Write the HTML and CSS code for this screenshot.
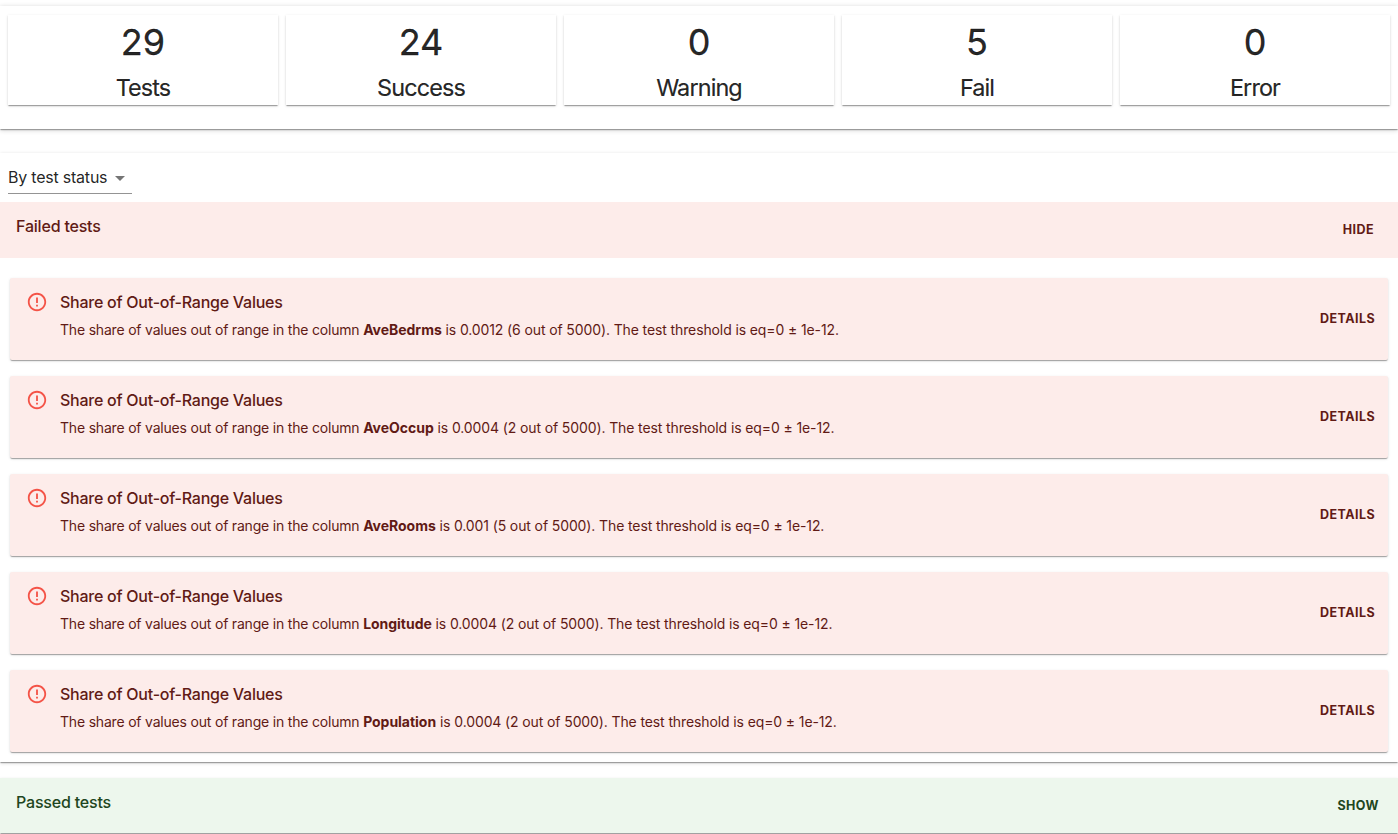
FILE: index.html
```html
<!DOCTYPE html>
<html lang="en">
<head>
<meta charset="utf-8">
<title>Test suite</title>
<link rel="stylesheet" href="styles.css">
</head>
<body>
<section class="paper summary">
  <div class="stat"><div class="num">29</div><div class="label">Tests</div></div>
  <div class="stat"><div class="num">24</div><div class="label">Success</div></div>
  <div class="stat"><div class="num">0</div><div class="label">Warning</div></div>
  <div class="stat"><div class="num">5</div><div class="label">Fail</div></div>
  <div class="stat"><div class="num">0</div><div class="label">Error</div></div>
</section>
<main class="paper group">
  <div class="select"><span class="select-text">By test status</span><svg class="caret" viewBox="0 0 24 24"><path d="M7 10l5 5 5-5z"/></svg></div>
  <div class="banner fail"><span class="title">Failed tests</span><span class="action hide">Hide</span></div>
  <div class="list">
    <article class="test"><svg class="icon" viewBox="0 0 24 24"><path d="M11 15h2v2h-2zm0-8h2v6h-2zm.99-5C6.47 2 2 6.48 2 12s4.47 10 9.99 10C17.52 22 22 17.52 22 12S17.52 2 11.99 2zM12 20c-4.42 0-8-3.58-8-8s3.58-8 8-8 8 3.58 8 8-3.58 8-8 8z"/></svg><div class="body"><h2 class="title">Share of Out-of-Range Values</h2><p class="text"><span class="lead">The share of values out of range in the column </span><b>AveBedrms</b> is 0.0012 (6 out of 5000). The test threshold is eq=0 ± 1e-12.</p></div><span class="action">Details</span></article>
    <article class="test"><svg class="icon" viewBox="0 0 24 24"><path d="M11 15h2v2h-2zm0-8h2v6h-2zm.99-5C6.47 2 2 6.48 2 12s4.47 10 9.99 10C17.52 22 22 17.52 22 12S17.52 2 11.99 2zM12 20c-4.42 0-8-3.58-8-8s3.58-8 8-8 8 3.58 8 8-3.58 8-8 8z"/></svg><div class="body"><h2 class="title">Share of Out-of-Range Values</h2><p class="text"><span class="lead">The share of values out of range in the column </span><b>AveOccup</b> is 0.0004 (2 out of 5000). The test threshold is eq=0 ± 1e-12.</p></div><span class="action">Details</span></article>
    <article class="test"><svg class="icon" viewBox="0 0 24 24"><path d="M11 15h2v2h-2zm0-8h2v6h-2zm.99-5C6.47 2 2 6.48 2 12s4.47 10 9.99 10C17.52 22 22 17.52 22 12S17.52 2 11.99 2zM12 20c-4.42 0-8-3.58-8-8s3.58-8 8-8 8 3.58 8 8-3.58 8-8 8z"/></svg><div class="body"><h2 class="title">Share of Out-of-Range Values</h2><p class="text"><span class="lead">The share of values out of range in the column </span><b>AveRooms</b> is 0.001 (5 out of 5000). The test threshold is eq=0 ± 1e-12.</p></div><span class="action">Details</span></article>
    <article class="test"><svg class="icon" viewBox="0 0 24 24"><path d="M11 15h2v2h-2zm0-8h2v6h-2zm.99-5C6.47 2 2 6.48 2 12s4.47 10 9.99 10C17.52 22 22 17.52 22 12S17.52 2 11.99 2zM12 20c-4.42 0-8-3.58-8-8s3.58-8 8-8 8 3.58 8 8-3.58 8-8 8z"/></svg><div class="body"><h2 class="title">Share of Out-of-Range Values</h2><p class="text"><span class="lead">The share of values out of range in the column </span><b>Longitude</b> is 0.0004 (2 out of 5000). The test threshold is eq=0 ± 1e-12.</p></div><span class="action">Details</span></article>
    <article class="test"><svg class="icon" viewBox="0 0 24 24"><path d="M11 15h2v2h-2zm0-8h2v6h-2zm.99-5C6.47 2 2 6.48 2 12s4.47 10 9.99 10C17.52 22 22 17.52 22 12S17.52 2 11.99 2zM12 20c-4.42 0-8-3.58-8-8s3.58-8 8-8 8 3.58 8 8-3.58 8-8 8z"/></svg><div class="body"><h2 class="title">Share of Out-of-Range Values</h2><p class="text"><span class="lead">The share of values out of range in the column </span><b>Population</b> is 0.0004 (2 out of 5000). The test threshold is eq=0 ± 1e-12.</p></div><span class="action">Details</span></article>
  </div>
</main>
<section class="paper passed">
  <div class="banner success"><span class="title">Passed tests</span><span class="action show">Show</span></div>
</section>
</body>
</html>
```

FILE: styles.css
```css
* { box-sizing: border-box; }
body { margin: 0; height: 834px; overflow: hidden; background: #fff; color: rgba(0,0,0,.87); font-family: Inter, "Liberation Sans", sans-serif; }
.paper { box-shadow: 0 2px 1px -1px rgba(0,0,0,.2), 0 1px 1px rgba(0,0,0,.14), 0 1px 3px rgba(0,0,0,.12); }
.summary { display: grid; grid-template-columns: repeat(5, 270px); gap: 8px; margin-top: 6px; height: 123px; padding: 9px 8px 24px; box-shadow: 0 2px 1px -1px rgba(0,0,0,.2), 0 1px 1px rgba(0,0,0,.14), 0 1px 5px rgba(0,0,0,.2); }
.stat { height: 90px; text-align: center; box-shadow: 0 2px 1px -1px rgba(0,0,0,.2), 0 1px 1px rgba(0,0,0,.14), 0 1px 3px rgba(0,0,0,.12); }
.num { font-size: 36px; line-height: 54px; -webkit-text-stroke: .3px; }
.label { font-size: 23.4px; line-height: 38px; letter-spacing: -.87px; -webkit-text-stroke: .2px; }
.group { margin-top: 24px; height: 609px; padding-top: 9px; box-shadow: 0 2px 1px -1px rgba(0,0,0,.2), 0 1px 1px rgba(0,0,0,.14), 0 1px 4px rgba(0,0,0,.16); }
.select { display: flex; align-items: center; width: 124px; height: 32px; margin-left: 8px; border-bottom: 1px solid rgba(0,0,0,.42); }
.select-text { width: 100px; flex: none; font-size: 16px; letter-spacing: -.22px; white-space: nowrap; padding-bottom: 2px; }
.caret { width: 24px; height: 24px; flex: none; fill: rgba(0,0,0,.54); }
.banner { display: flex; justify-content: space-between; height: 56px; padding: 13px 24px 0 16px; margin-top: 8px; }
.title { margin: 0; font-size: 16px; line-height: 22px; font-weight: 500; letter-spacing: -.25px; }
.banner .title { letter-spacing: -.2px; }
.action { font-size: 12.5px; line-height: 22px; font-weight: 700; letter-spacing: .42px; text-transform: uppercase; }
.fail, .test { background: #fdecea; color: #611a15; }
.list { display: flex; flex-direction: column; gap: 16px; padding: 20px 10px 0; }
.test { display: flex; height: 82px; padding: 13px 13px 0 16px; border-radius: 2px; box-shadow: 0 2px 1px -1px rgba(0,0,0,.2), 0 1px 1px rgba(0,0,0,.14), 0 1px 3px rgba(0,0,0,.12); }
.icon { width: 22px; height: 22px; fill: #f44336; opacity: .9; }
.body { flex: 1; margin-left: 12px; }
.text { margin: 7px 0 0; font-size: 14px; line-height: 20px; letter-spacing: -.115px; }
.text b { letter-spacing: -.03px; }
.lead { letter-spacing: -.195px; }
.test .action { margin-top: 17px; }
.passed { margin-top: 16px; }
.success { background: #edf7ed; color: #1e4620; padding-right: 19px; height: 55px; }
.hide, .show { margin-top: 4px; }
```
